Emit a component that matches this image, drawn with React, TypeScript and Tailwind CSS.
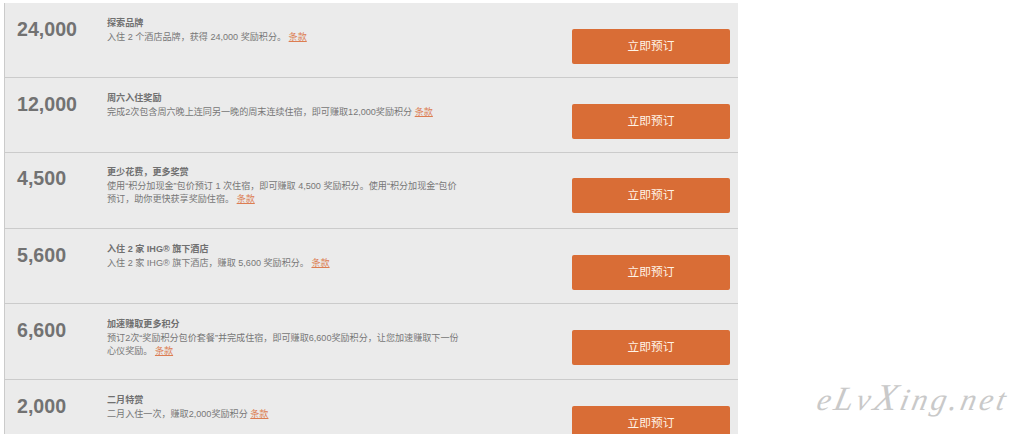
type Offer = {
  points: string;
  title: string;
  lines: string[];
  height: string;
};

const offers: Offer[] = [
  {
    points: "24,000",
    title: "探索品牌",
    lines: ["入住 2 个酒店品牌，获得 24,000 奖励积分。 "],
    height: "h-[75px]",
  },
  {
    points: "12,000",
    title: "周六入住奖励",
    lines: ["完成2次包含周六晚上连同另一晚的周末连续住宿，即可赚取12,000奖励积分 "],
    height: "h-[75px]",
  },
  {
    points: "4,500",
    title: "更少花费，更多奖赏",
    lines: [
      "使用“积分加现金”包价预订 1 次住宿，即可赚取 4,500 奖励积分。使用“积分加现金”包价",
      "预订，助你更快获享奖励住宿。 ",
    ],
    height: "-mt-px h-[77px]",
  },
  {
    points: "5,600",
    title: "入住 2 家 IHG® 旗下酒店",
    lines: ["入住 2 家 IHG® 旗下酒店，赚取 5,600 奖励积分。 "],
    height: "h-[75px]",
  },
  {
    points: "6,600",
    title: "加速赚取更多积分",
    lines: [
      "预订2次“奖励积分包价套餐”并完成住宿，即可赚取6,600奖励积分，让您加速赚取下一份",
      "心仪奖励。 ",
    ],
    height: "h-[76px]",
  },
  {
    points: "2,000",
    title: "二月特赏",
    lines: ["二月入住一次，赚取2,000奖励积分 "],
    height: "h-[76px]",
  },
];

const OfferRow = ({ points, title, lines, height }: Offer) => {
  return (
    <div className={`flex shrink-0 border-b border-[#cbcbcb] pl-3 pr-2 ${height}`}>
      <div className="w-[90px] shrink-0 pt-[14px] text-[19.6px] leading-6 font-bold text-[#727272]">
        {points}
      </div>

      <div className="flex-1 pt-[13px] text-[9.08px] leading-[13px] whitespace-pre text-[#777777]">
        <h2 className="leading-[15px] font-bold text-[#707070]">{title}</h2>
        {lines.map((line, i) => (
          <p key={line}>
            {line}
            {i === lines.length - 1 && (
              <a href="#" className="text-[#dc7d52] underline">
                条款
              </a>
            )}
          </p>
        ))}
      </div>

      <button className="mt-[26px] h-[35px] w-[158px] shrink-0 rounded-[2px] bg-[#d96d36] pb-px text-[11.7px] text-[#fff4e8]">
        立即预订
      </button>
    </div>
  );
};

export default function App() {
  return (
    <div className="relative h-[434px] overflow-hidden bg-white pt-[3px] pl-1 font-['Liberation_Sans','Noto_Sans_CJK_SC',sans-serif]">
      <div className="flex w-[734px] flex-col border-l border-[#cbcbcb] bg-[#ebebeb]">
        {offers.map((offer) => (
          <OfferRow key={offer.points} {...offer} />
        ))}
      </div>

      <div className="absolute top-[377px] left-[818px] -skew-x-12 font-['Liberation_Serif',serif] text-[31px] leading-10 tracking-[3.3px] whitespace-nowrap text-[#c9c9c9] italic">
        e<span className="text-[34px]">L</span>v<span className="text-[38px]">X</span>ing.net
      </div>
    </div>
  );
}
